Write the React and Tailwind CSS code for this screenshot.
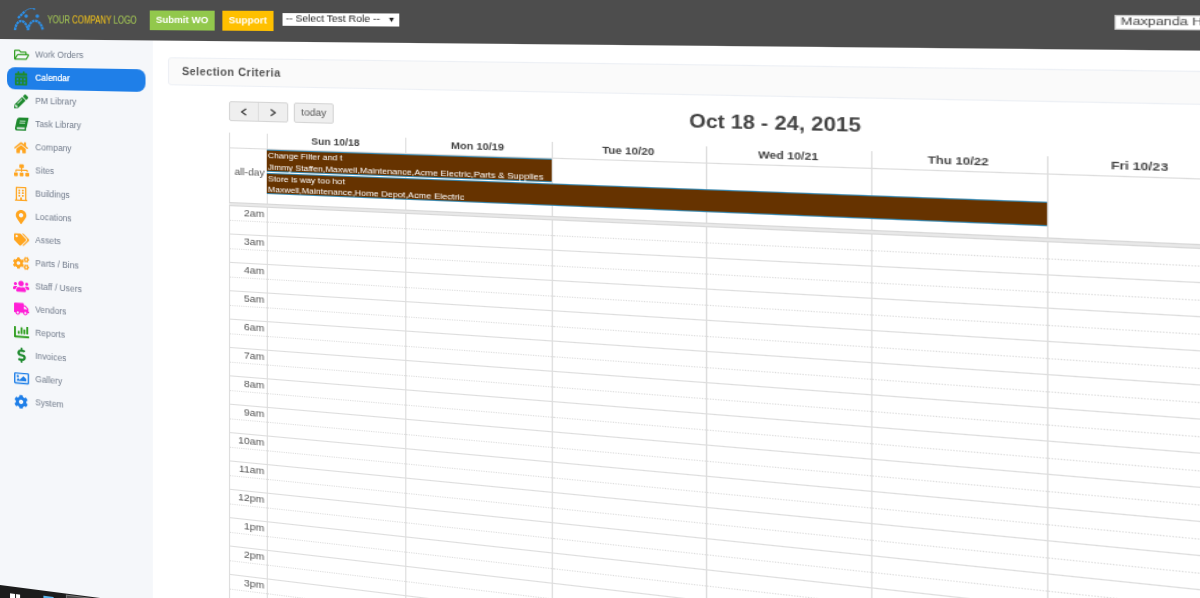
import React from "react";
import {
  FaRegFolderOpen, FaCalendarAlt, FaPencilAlt, FaBook, FaHome, FaSitemap, FaRegBuilding,
  FaMapMarkerAlt, FaTags, FaCogs, FaUsers, FaTruck, FaChartBar, FaDollarSign, FaRegImage, FaCog,
} from "react-icons/fa";

const nav = [
  ["Work Orders", FaRegFolderOpen, "text-[#2f9e1f]", "text-[15px]"],
  ["Calendar", FaCalendarAlt, "text-[#1e8a2e]", "text-[14px]"],
  ["PM Library", FaPencilAlt, "text-[#1e8a2e]", "text-[14px]"],
  ["Task Library", FaBook, "text-[#1e8a2e]", "text-[13px] -skew-x-12"],
  ["Company", FaHome, "text-[#ffa51f]", "text-[14px]"],
  ["Sites", FaSitemap, "text-[#ffa51f]", "text-[15px]"],
  ["Buildings", FaRegBuilding, "text-[#ffa51f]", "text-[14px]"],
  ["Locations", FaMapMarkerAlt, "text-[#ffa51f]", "text-[14px]"],
  ["Assets", FaTags, "text-[#ffa51f]", "text-[15px]"],
  ["Parts / Bins", FaCogs, "text-[#ffa51f]", "text-[16px]"],
  ["Staff / Users", FaUsers, "text-[#ff1fd6]", "text-[16px]"],
  ["Vendors", FaTruck, "text-[#ff1fd6]", "text-[15px]"],
  ["Reports", FaChartBar, "text-[#2f9e1f]", "text-[15px]"],
  ["Invoices", FaDollarSign, "text-[#1e8a2e]", "text-[15px]"],
  ["Gallery", FaRegImage, "text-[#1f7fe8]", "text-[15px]"],
  ["System", FaCog, "text-[#1f7fe8]", "text-[14px]"],
];

const days = ["Sun 10/18", "Mon 10/19", "Tue 10/20", "Wed 10/21", "Thu 10/22", "Fri 10/23", "Sat 10/24"];
const hours = ["2am", "3am", "4am", "5am", "6am", "7am", "8am", "9am", "10am", "11am", "12pm", "1pm", "2pm", "3pm", "4pm"];

function Logo() {
  return (
    <svg width="32" height="24" viewBox="0 0 32 24" className="shrink-0">
      <g fill="none" stroke="#2d8fe6" strokeWidth="2.4" strokeDasharray="2.6 0.6">
        <path d="M2 22 C3 11 12 9 15 22" />
        <path d="M15 22 C16 10 27 9 29.5 22" />
        <path d="M5 10 L12 3" />
      </g>
      <path d="M12 3 C15 0.5 18 0 21 0.5" fill="none" stroke="#2d8fe6" strokeWidth="0.8" />
      <g fill="#2d8fe6">
        <circle cx="13" cy="8" r="1.8" />
        <circle cx="24" cy="8" r="1.8" />
        <circle cx="21" cy="0.9" r="0.9" />
      </g>
    </svg>
  );
}

function NavItem({ label, Icon, color, size, active }) {
  return (
    <div className="flex h-[23px] items-center">
      <div className={`flex h-[22px] w-[134px] items-center rounded-[8px] pl-[5px] ${active ? "bg-[#1f7fe8]" : ""}`}>
        <span className="flex w-[18px] shrink-0 items-center justify-center">
          <Icon className={`${size} ${color}`} />
        </span>
        <span className={`ml-[5px] text-[8.3px] ${active ? "text-white [text-shadow:0_0_0.6px_white]" : "text-[#707a8a]"}`}>{label}</span>
      </div>
    </div>
  );
}

export default function App() {
  return (
    <div className="relative h-[598px] w-[1200px] overflow-hidden bg-white font-['Liberation_Sans',Arial,sans-serif]">
      <div className="relative flex h-[640px] w-[1000px] origin-top-left flex-col blur-[0.3px] [transform:matrix3d(1,0.0011,0,-0.00022,0,1,0,0,0,0,1,0,0,0,0,1)]">
        <header className="-mt-[6px] flex h-[45px] shrink-0 items-center bg-[#4d4d4d] pl-[13px] pt-[6px]">
          <Logo />
          <div className="ml-[2px] w-[85px] shrink-0 font-['Liberation_Sans',sans-serif] text-[11px]">
            <div className="origin-left scale-x-[0.69] whitespace-nowrap">
              <span className="text-[#a9cf54]">YOUR </span>
              <span className="text-[#f5c518]">COMPANY </span>
              <span className="text-[#a9cf54]">LOGO</span>
            </div>
          </div>
          <button className="ml-[13px] flex h-[19px] w-[60px] shrink-0 items-center justify-center bg-[#92c84c] text-[9px] font-bold text-white">Submit WO</button>
          <button className="ml-[7px] flex h-[19px] w-[46px] shrink-0 items-center justify-center bg-[#ffc000] text-[9px] font-bold text-white">Support</button>
          <div className="mb-[3px] ml-[8px] flex h-[12px] w-[101px] shrink-0 items-center justify-between bg-white px-[3px] text-[9px] text-[#222]">
            <span className="whitespace-nowrap">-- Select Test Role --</span>
            <span className="text-[7px]">▼</span>
          </div>
          <div className="mb-[5px] ml-auto flex h-[12px] w-[105px] shrink-0 items-center border border-[#ccc] bg-white pl-[3px] text-[9.2px] text-[#444]">
            <span className="whitespace-nowrap">Maxpanda Home</span>
          </div>
        </header>

        <div className="flex flex-1">
          <aside className="w-[148px] shrink-0 bg-[#f5f7fa] pl-[7px] pt-[4px]">
            {nav.map(([label, Icon, color, size]) => (
              <NavItem key={label} label={label} Icon={Icon} color={color} size={size} active={label === "Calendar"} />
            ))}
          </aside>

          <main className="min-w-0 flex-1 pt-[16px]">
            <div className="ml-[14px] flex h-[27px] items-center rounded-l-[3px] border border-[#edf0f5] bg-[#fafafa] pl-[12px] text-[10px] font-bold tracking-[0.4px] text-[#555]">
              Selection Criteria
            </div>

            <div className="ml-[70px] mt-[14px] flex h-[19px] w-[900px] items-start">
              <div className="flex h-[19px] w-[53px] rounded-[2px] border border-[#d5d5d5] bg-[#efefef] text-[#333]">
                <span className="flex flex-1 items-center justify-center border-r border-[#ddd]">
                  <svg width="7" height="8" viewBox="0 0 7 8" fill="none" stroke="#333" strokeWidth="1.2"><path d="M5.5 1 L1.5 4 L5.5 7" /></svg>
                </span>
                <span className="flex flex-1 items-center justify-center">
                  <svg width="7" height="8" viewBox="0 0 7 8" fill="none" stroke="#333" strokeWidth="1.2"><path d="M1.5 1 L5.5 4 L1.5 7" /></svg>
                </span>
              </div>
              <div className="ml-[5px] flex h-[19px] w-[35px] items-center justify-center rounded-[2px] border border-[#d5d5d5] bg-[#efefef] text-[9px] text-[#555]">today</div>
              <div className="ml-[287.5px] whitespace-nowrap text-[16px] font-bold leading-[17px] text-[#444]">Oct 18 - 24, 2015</div>
            </div>

            <div className="ml-[70px] mt-[11px] w-[873px]">
              <div className="grid h-[13px] grid-cols-[34px_repeat(7,119.75px)]">
                <div className="border-b border-l border-[#ddd]" />
                {days.map((d) => (
                  <div key={d} className="flex items-center justify-center border-b border-l border-[#ddd] text-[9px] font-bold text-[#444]">{d}</div>
                ))}
              </div>

              <div className="relative grid h-[53px] grid-cols-[34px_repeat(7,119.75px)]">
                <div className="flex items-center justify-end border-l border-[#ddd] pb-[3px] pr-[2px] text-[9.2px] text-[#555]">all-day</div>
                {days.map((d) => (
                  <div key={d} className="border-l border-[#ddd]" />
                ))}
                <div className="absolute left-[34px] top-[2px] flex h-[21px] w-[239.5px] flex-col border-y border-[#3a87ad] bg-[#663300] pl-[1px] text-[7.7px] leading-[10.5px] text-white">
                  <span>Change Filter and t</span>
                  <span className="whitespace-nowrap">Jimmy Staffen,Maxwell,Maintenance,Acme Electric,Parts &amp; Supplies</span>
                </div>
                <div className="absolute left-[34px] top-[23.5px] flex h-[20px] w-[598.5px] flex-col border-y border-[#3a87ad] bg-[#663300] pl-[1px] text-[7.7px] leading-[10px] text-white">
                  <span>Store is way too hot</span>
                  <span className="whitespace-nowrap">Maxwell,Maintenance,Home Depot,Acme Electric</span>
                </div>
              </div>

              <div className="h-[4px] border-y border-[#d8d8d8] bg-[#e8e8e8]" />

              {hours.map((h) => (
                <div key={h} className="grid h-[27px] grid-cols-[34px_repeat(7,119.75px)] border-b border-[#ddd]">
                  <div className="border-l border-[#ddd]">
                    <div className="flex h-[13.5px] items-center justify-end border-b border-dotted border-[#ddd] pr-[2px] text-[9.5px] text-[#555]">{h}</div>
                  </div>
                  {days.map((d) => (
                    <div key={d} className="border-l border-[#ddd]">
                      <div className="h-[13.5px] border-b border-dotted border-[#ddd]" />
                    </div>
                  ))}
                </div>
              ))}
            </div>
          </main>
        </div>

        <div className="absolute left-0 top-[585px] flex h-[40px] w-[1000px] items-start bg-[#1c1c1c] pl-[10px]">
          <div className="mt-[7px] grid h-[10px] w-[10px] grid-cols-2 gap-[1px]">
            <span className="bg-white" /><span className="bg-white" /><span className="bg-white" /><span className="bg-white" />
          </div>
          <span className="ml-[23px] mt-[5px] h-[12px] w-[10px] bg-[#5cb8f0]" />
          <span className="ml-[12px] mt-[1px] h-[30px] w-[60px] border border-[#777] bg-[#4a4a4a]" />
        </div>
      </div>
    </div>
  );
}
